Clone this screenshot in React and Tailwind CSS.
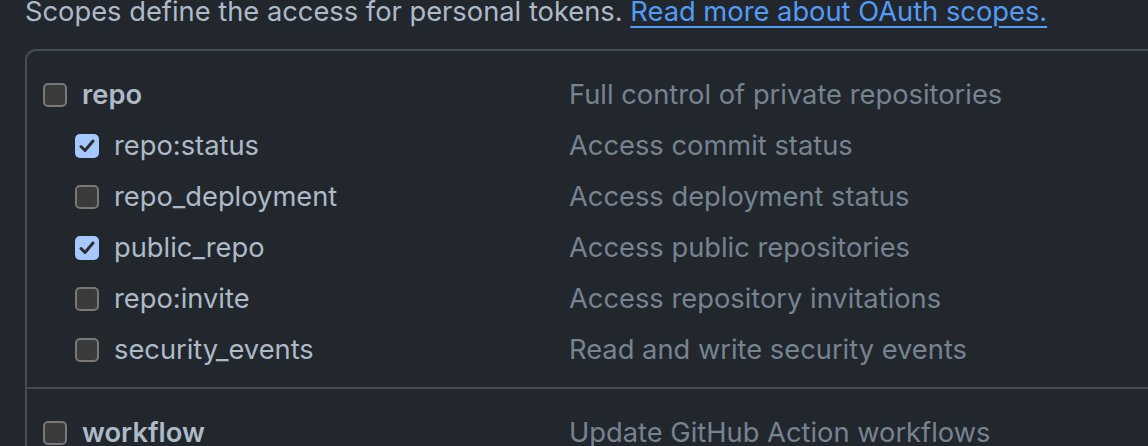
import React from "react";

function Box({ checked }) {
  if (checked) {
    return (
      <span className="flex h-[24px] w-[24px] shrink-0 items-center justify-center rounded-[5px] bg-[#a6c8fd]">
        <svg width="20" height="20" viewBox="0 0 20 20" fill="none">
          <path d="M4 10.5 L8 14.5 L16 5" stroke="#2e2e2e" strokeWidth="3" strokeLinecap="round" strokeLinejoin="round" />
        </svg>
      </span>
    );
  }
  return <span className="block h-[24px] w-[24px] shrink-0 rounded-[5px] border-2 border-[#787878] bg-[#3b3b3b]" />;
}

function Row({ label, desc, checked, sub, bold }) {
  return (
    <div className="flex h-[51px] items-center">
      <div className={"flex w-[526px] items-center gap-[15px] " + (sub ? "pl-[32px]" : "")}>
        <Box checked={checked} />
        <span className={"text-[#adbac7] " + (bold ? "font-semibold" : "")}>{label}</span>
      </div>
      <span className="text-[#768390]">{desc}</span>
    </div>
  );
}

export default function App() {
  return (
    <div
      className="h-[446px] w-[1148px] overflow-hidden bg-[#22272e] text-[27.3px] leading-[36px]"
      style={{ fontFamily: "Inter, 'Noto Sans', sans-serif" }}
    >
      <div className="mt-[-6px] pl-[25px] text-[#adbac7] whitespace-nowrap">
        Scopes define the access for personal tokens.{" "}
        <a className="text-[#539bf5] underline decoration-2 underline-offset-[5px]">Read more about OAuth scopes.</a>
      </div>
      <div className="ml-[25px] mt-[19px] w-[1200px] rounded-[11px] border-2 border-[#444c56]">
        <div className="pl-[16px] pt-[18px] pb-[12px]">
          <Row label="repo" desc="Full control of private repositories" bold />
          <Row label="repo:status" desc="Access commit status" checked sub />
          <Row label="repo_deployment" desc="Access deployment status" sub />
          <Row label="public_repo" desc="Access public repositories" checked sub />
          <Row label="repo:invite" desc="Access repository invitations" sub />
          <Row label="security_events" desc="Read and write security events" sub />
        </div>
        <div className="border-t-2 border-[#444c56] pl-[16px] pt-[18px]">
          <Row label="workflow" desc="Update GitHub Action workflows" bold />
        </div>
      </div>
    </div>
  );
}
